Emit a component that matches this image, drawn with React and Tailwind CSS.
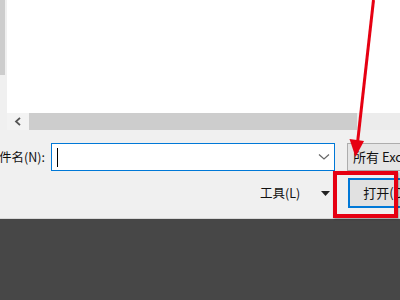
import React from "react";

export default function App() {
  const font = { fontFamily: '"Noto Sans CJK SC", "Liberation Sans", sans-serif' };
  return (
    <div className="relative w-[400px] h-[300px] overflow-hidden bg-[#f0f0f0]" style={font}>
      {/* top list area */}
      <div className="flex h-[130px]">
        <div className="w-[7px] shrink-0 flex flex-col bg-[#f0f0f0]">
          <div className="w-[5px] h-[75px] bg-[#cdcdcd]" />
        </div>
        <div className="flex-1 min-w-0 flex flex-col">
          <div className="h-[113px] bg-white" />
          <div className="h-[17px] flex bg-[#f0f0f0]">
            <div className="w-[22px] shrink-0 flex items-center justify-center bg-[#f3f3f3]">
              <svg width="8" height="9" viewBox="0 0 8 9" className="shrink-0">
                <path d="M6 0.8 L2 4.5 L6 8.2" stroke="#555" strokeWidth="1.8" fill="none" />
              </svg>
            </div>
            <div className="w-[328px] shrink-0 bg-[#cdcdcd]" />
            <div className="flex-1 min-w-0 bg-[#ececec]" />
          </div>
        </div>
      </div>

      {/* filename row */}
      <div className="flex items-center h-[28px] mt-[13px]">
        <div className="w-[51px] shrink-0 flex justify-end pr-[6px] text-[12.5px] text-[#111] leading-none">
          <span className="whitespace-nowrap shrink-0">文件名(N):</span>
        </div>
        <div className="w-[284px] shrink-0 h-[28px] border border-[#0078d7] bg-white flex items-center pl-[5px]">
          <div className="w-px h-[19px] bg-black shrink-0" />
          <div className="flex-1" />
          <svg width="12" height="8" viewBox="0 0 12 8" className="mr-[4px] shrink-0">
            <path d="M1 1.5 L6 6 L11 1.5" stroke="#666" strokeWidth="1.2" fill="none" />
          </svg>
        </div>
        <div className="ml-[12px] flex-1 min-w-0 overflow-hidden h-[28px] border border-[#adadad] border-r-0 bg-[#e5e5e5] flex items-center pl-[5px] text-[13px] text-[#111] whitespace-nowrap">
          所有 Excel 文件
        </div>
      </div>

      {/* button row */}
      <div className="flex items-center h-[30px] mt-[7px]">
        <div className="ml-[260px] shrink-0 text-[12.5px] text-[#111] whitespace-nowrap leading-none">工具(L)</div>
        <svg width="9" height="5" viewBox="0 0 9 5" className="ml-[21px] shrink-0">
          <path d="M0 0 L9 0 L4.5 5 Z" fill="#222" />
        </svg>
        <div className="ml-[18px] flex-1 min-w-0 overflow-hidden h-[30px] border-2 border-r-0 border-[#0078d7] bg-[#e1e1e1] flex items-center pl-[13px] text-[13px] text-[#111] whitespace-nowrap">
          打开(O)
        </div>
      </div>

      {/* dark bottom */}
      <div className="mt-[10px] h-[82px] bg-[#474747] border-t border-[#d8d8d8]" />

      {/* annotations */}
      <div className="absolute left-[333px] top-[171px] w-[65px] h-[47px] border-4 border-[#e60012] shadow-[1px_1px_2px_rgba(0,0,0,0.35)]" />
      <svg className="absolute left-0 top-0 pointer-events-none" width="400" height="300" viewBox="0 0 400 300">
        <line x1="373.5" y1="0" x2="357.5" y2="143" stroke="#e60012" strokeWidth="3" />
        <polygon points="349.5,139 364,141 355.5,157" fill="#e60012" />
      </svg>
    </div>
  );
}
